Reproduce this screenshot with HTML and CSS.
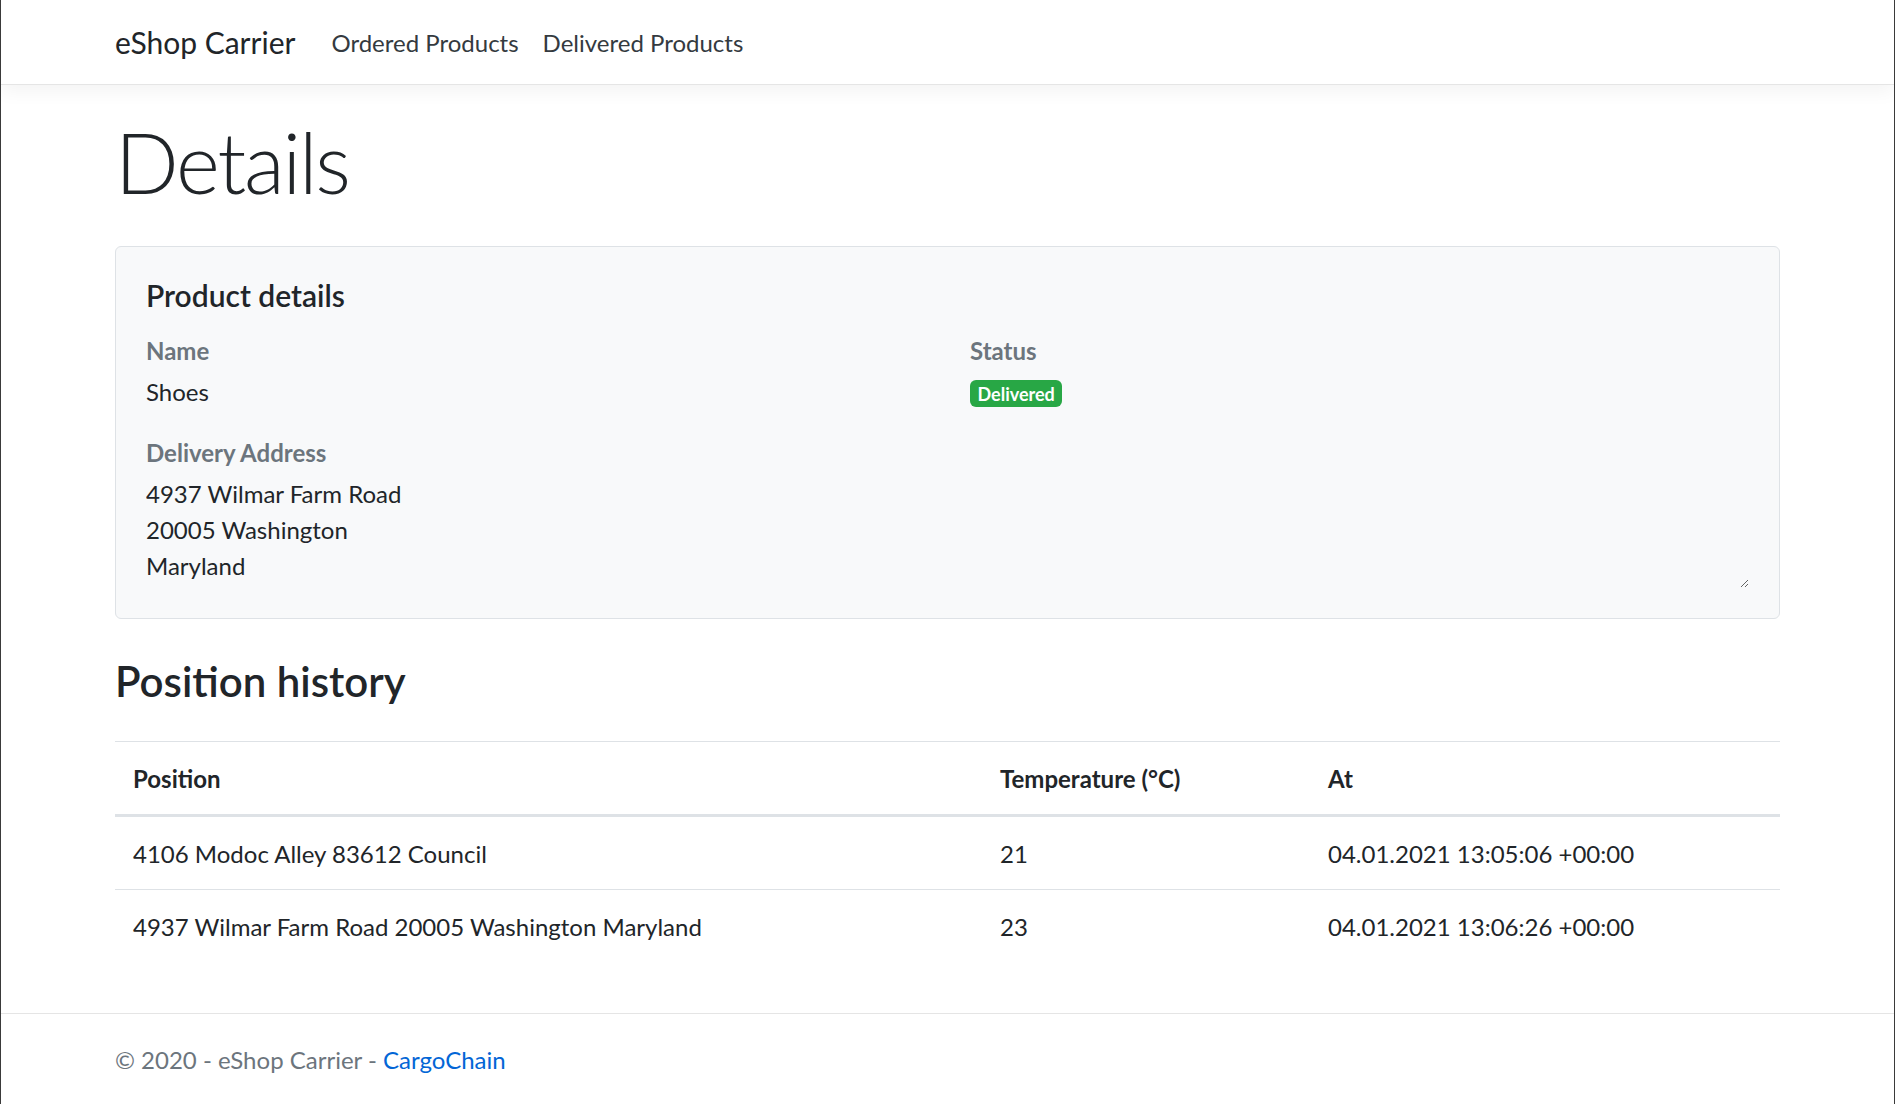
FILE: index.html
```html
<!DOCTYPE html>
<html lang="en">
<head>
<meta charset="utf-8">
<title>Details - eShop Carrier</title>
<link rel="stylesheet" href="styles.css">
</head>
<body>
<header class="navbar">
  <div class="container nav-inner">
    <a class="brand" href="#">eShop Carrier</a>
    <ul class="nav-list">
      <li><a class="nav-link" href="#">Ordered Products</a></li>
      <li><a class="nav-link" href="#">Delivered Products</a></li>
    </ul>
  </div>
</header>

<main class="container main">
  <h1 class="display">Details</h1>

  <section class="detail-card">
    <div class="detail-body">
      <h5 class="card-title">Product details</h5>
      <div class="detail-grid">
        <div class="field">
          <div class="label">Name</div>
          <p class="value">Shoes</p>
        </div>
        <div class="field">
          <div class="label">Status</div>
          <p class="value"><span class="badge">Delivered</span></p>
        </div>
        <div class="field">
          <div class="label">Delivery Address</div>
          <p class="value address">4937 Wilmar Farm Road<br>20005 Washington<br>Maryland</p>
        </div>
      </div>
    </div>
  </section>

  <h3 class="section-title">Position history</h3>

  <table class="table">
    <thead>
      <tr>
        <th class="col-pos">Position</th>
        <th class="col-temp">Temperature (°C)</th>
        <th class="col-at">At</th>
      </tr>
    </thead>
    <tbody>
      <tr>
        <td>4106 Modoc Alley 83612 Council</td>
        <td>21</td>
        <td>04.01.2021 13:05:06 +00:00</td>
      </tr>
      <tr>
        <td>4937 Wilmar Farm Road 20005 Washington Maryland</td>
        <td>23</td>
        <td>04.01.2021 13:06:26 +00:00</td>
      </tr>
    </tbody>
  </table>
</main>

<footer class="footer">
  <div class="container">
    © 2020 - eShop Carrier - <a href="#" class="footer-link">CargoChain</a>
  </div>
</footer>
</body>
</html>
```

FILE: styles.css
```css
* { box-sizing: border-box; }

html { height: 100%; }

body {
  margin: 0;
  min-height: 100vh;
  display: flex;
  flex-direction: column;
  font-family: "Lato", "Liberation Sans", Arial, sans-serif;
  font-size: 24px;
  line-height: 36px;
  color: #212529;
  background: #fff;
  border-left: 1px solid #3a3a3a;
  border-right: 1px solid #3a3a3a;
  border-bottom: 1px solid #3a3a3a;
}

.container {
  width: 100%;
  max-width: 1710px;
  padding: 0 22.5px;
  margin: 0 auto;
}

/* Navbar */
.navbar {
  background: #fff;
  border-bottom: 1px solid #e5e5e5;
  box-shadow: 0 6px 18px rgba(0, 0, 0, 0.05);
  position: relative;
  z-index: 1;
}

.nav-inner {
  display: flex;
  align-items: center;
  height: 84px;
}

.brand {
  font-size: 30px;
  line-height: 45px;
  color: #212529;
  text-decoration: none;
  margin-right: 24px;
}

.nav-list {
  list-style: none;
  display: flex;
  margin: 0;
  padding: 0;
}

.nav-link {
  display: block;
  padding: 14px 12px 12px;
  color: #343a40;
  text-decoration: none;
  line-height: 36px;
}

/* Main */
.main {
  padding-top: 27px;
  padding-bottom: 27px;
}

.display {
  font-family: "Lato", "Liberation Sans", sans-serif;
  font-weight: 300;
  font-size: 84px;
  line-height: 100.8px;
  letter-spacing: -2.2px;
  margin: 0 0 33px;
  color: #212529;
}

.detail-card {
  background: #f8f9fa;
  border: 1px solid #dee2e6;
  border-radius: 6px;
  padding: 30px;
}

.detail-body {
  resize: vertical;
  overflow: auto;
  padding-bottom: 4px;
}

.card-title {
  font-size: 30px;
  line-height: 36px;
  font-weight: 600;
  margin: 0 0 20px;
  color: #212529;
}

.detail-grid {
  display: grid;
  grid-template-columns: 1fr 1fr;
  column-gap: 45px;
}

.label {
  font-weight: 700;
  color: #6c757d;
  margin-bottom: 5px;
}

.value {
  margin: 0 0 25px;
}

.address {
  margin-bottom: 0;
}

.badge {
  display: inline-block;
  background: #28a745;
  color: #fff;
  font-size: 18px;
  font-weight: 700;
  line-height: 18px;
  padding: 4.5px 7.5px;
  border-radius: 6px;
  vertical-align: baseline;
}

.section-title {
  font-size: 42px;
  line-height: 50.4px;
  font-weight: 600;
  margin: 37px 0 35px;
}

/* Table */
.table {
  width: 100%;
  border-collapse: collapse;
  margin-bottom: 24px;
}

.table th,
.table td {
  padding: 19px 18px 17px;
  text-align: left;
  vertical-align: top;
  border-top: 1px solid #dee2e6;
}

.table thead th {
  vertical-align: bottom;
  border-bottom: 3px solid #dee2e6;
  font-weight: 700;
}

.col-pos { width: 867px; }
.col-temp { width: 328px; }

/* Footer */
.footer {
  margin-top: auto;
  border-top: 1px solid #e5e5e5;
  line-height: 89px;
  padding-top: 1px;
  color: #6c757d;
  white-space: nowrap;
}

.footer-link {
  color: #0366d6;
  text-decoration: none;
}
```
